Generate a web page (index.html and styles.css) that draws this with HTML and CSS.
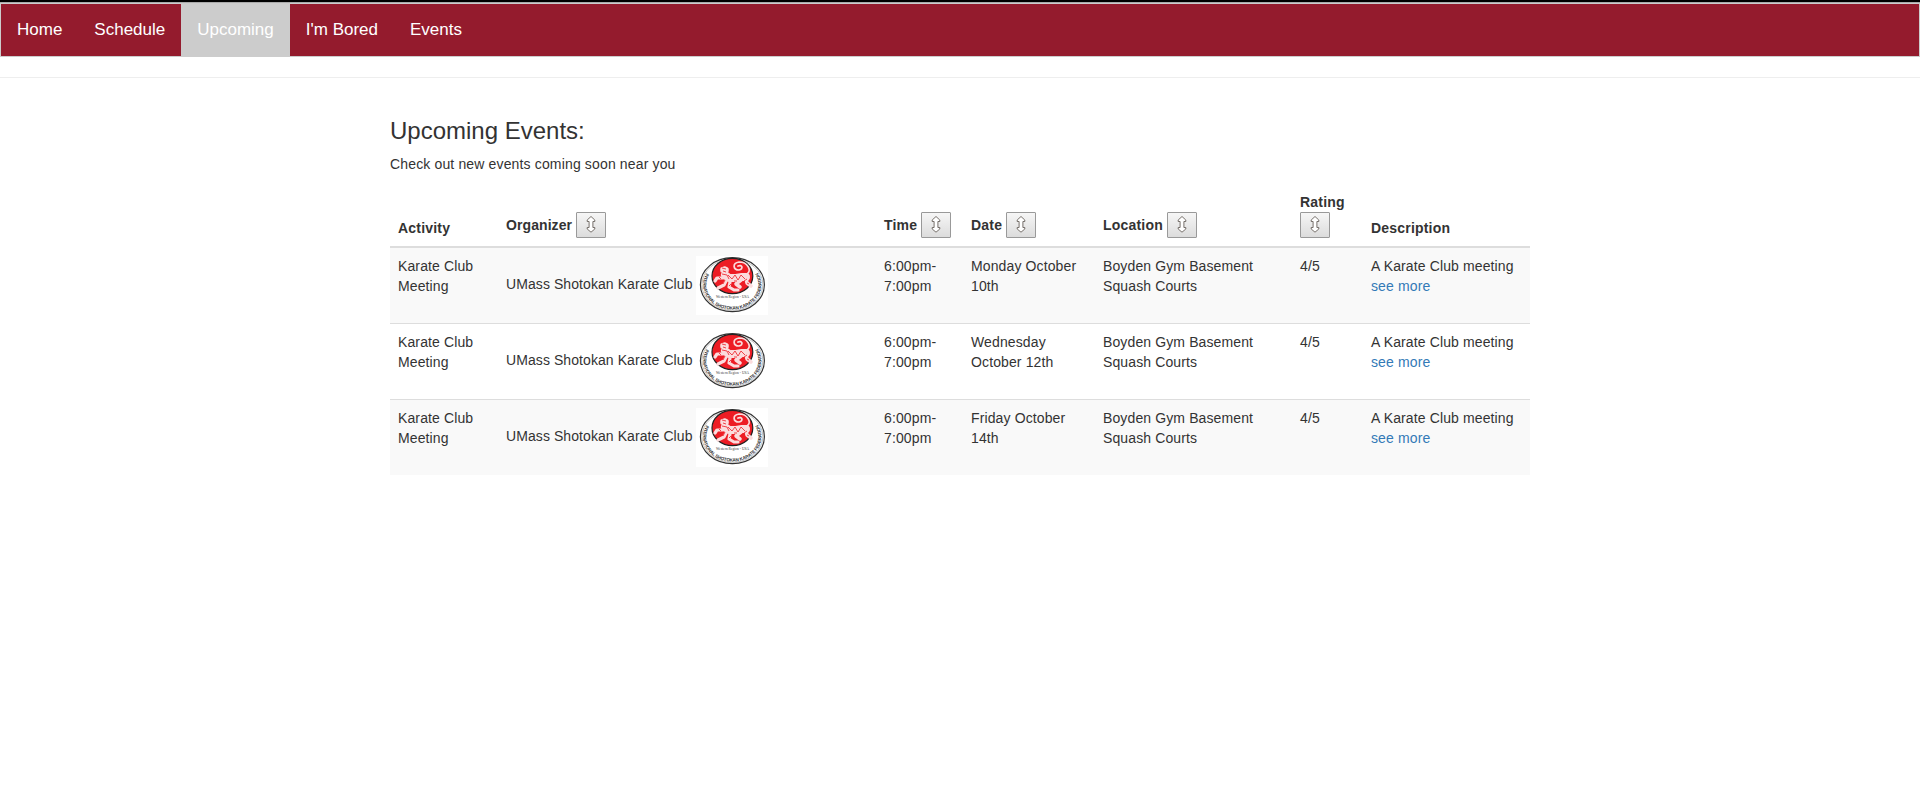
FILE: index.html
```html
<!DOCTYPE html>
<html lang="en">
<head>
<meta charset="utf-8">
<title>Upcoming Events</title>
<link rel="stylesheet" href="styles.css">
</head>
<body>
<svg class="defs" aria-hidden="true">
  <symbol id="sort" viewBox="0 0 10 18">
    <path d="M5 1.5 8.800 5V6.5H6.9V12.5H8.800V14L5 17.200 1.200 14V12.5H3.1V6.5H1.200V5Z" fill="#fff" stroke="#69625c" stroke-width=".9"/>
  </symbol>
  <symbol id="emblem" viewBox="0 0 72 59">
    <rect width="72" height="59" fill="#fff"/>
    <ellipse cx="36.4" cy="28.7" rx="32" ry="27" fill="#fff" stroke="#333" stroke-width="1.2"/>
    <ellipse cx="36.4" cy="28.7" rx="30.5" ry="25.6" fill="none" stroke="#888" stroke-width=".5"/>
    <path id="ring" d="M10.600 17A29.200 24.800 0 1 0 62 17" fill="none"/>
    <text class="ring-text"><textPath href="#ring" textLength="110">INTERNATIONAL SHOTOKAN KARATE FEDERATION</textPath></text>
    <ellipse cx="36.4" cy="20" rx="20.400" ry="17.600" fill="#ed1c24" stroke="#222" stroke-width="1.200"/>
    <g fill="none" stroke="#fbdcdd" stroke-linecap="round" stroke-linejoin="round">
      <path d="M26 15 26 13 29 12 31 13 31 15 28 16" stroke-width="3.500"/>
      <path d="M29 19 33 22 40 22 46 21 50 21" stroke-width="8"/>
      <path d="M27 22 21 22 19 25M30 25 28 29 22 32M34 26 33 31 38 34 42 34" stroke-width="3.200"/>
      <path d="M50 22 51 27 55 30M45 24 40 28 44 31" stroke-width="3.600"/>
      <path d="M51 18C56 15 52 6 43 6 36 7 37 14 43 14 48 13 46 8 42 10" stroke-width="1.700"/>
    </g>
    <path d="M26 12l4 1M26 18l5 1 2 4M32 19l4 4 3-4 3 5 3-5 4 4M29 24l-2 4M23 21l2 2M51 23l-3 2M35 28l-2 2M38 25h3M27 15l3 1M51 27l2 1" fill="none" stroke="#ed1c24" stroke-width=".8"/>
    <text class="region-text" x="36.500" y="42" textLength="33">Western Region - USA</text>
  </symbol>
</svg>
<div class="topline"></div>
<ul class="nav">
  <li><a>Home</a></li>
  <li><a>Schedule</a></li>
  <li class="active"><a>Upcoming</a></li>
  <li><a>I'm Bored</a></li>
  <li><a>Events</a></li>
</ul>
<hr class="rule">
<main class="container">
  <h3 class="title">Upcoming Events:</h3>
  <p class="lead">Check out new events coming soon near you</p>
  <table class="events">
    <colgroup><col class="c-activity"><col class="c-organizer"><col class="c-time"><col class="c-date"><col class="c-location"><col class="c-rating"><col class="c-description"></colgroup>
    <thead>
      <tr>
        <th>Activity</th>
        <th class="organizer">Organizer <button class="sort"><svg><use href="#sort"/></svg></button></th>
        <th>Time <button class="sort"><svg><use href="#sort"/></svg></button></th>
        <th>Date <button class="sort"><svg><use href="#sort"/></svg></button></th>
        <th>Location <button class="sort"><svg><use href="#sort"/></svg></button></th>
        <th>Rating <button class="sort"><svg><use href="#sort"/></svg></button></th>
        <th>Description</th>
      </tr>
    </thead>
    <tbody>
      <tr>
        <td>Karate Club Meeting</td>
        <td class="organizer">UMass Shotokan Karate Club <svg class="emblem"><use href="#emblem"/></svg></td>
        <td>6:00pm-7:00pm</td>
        <td>Monday October 10th</td>
        <td>Boyden Gym Basement Squash Courts</td>
        <td>4/5</td>
        <td>A Karate Club meeting <a class="more">see more</a></td>
      </tr>
      <tr>
        <td>Karate Club Meeting</td>
        <td class="organizer">UMass Shotokan Karate Club <svg class="emblem"><use href="#emblem"/></svg></td>
        <td>6:00pm-7:00pm</td>
        <td>Wednesday October 12th</td>
        <td>Boyden Gym Basement Squash Courts</td>
        <td>4/5</td>
        <td>A Karate Club meeting <a class="more">see more</a></td>
      </tr>
      <tr>
        <td>Karate Club Meeting</td>
        <td class="organizer">UMass Shotokan Karate Club <svg class="emblem"><use href="#emblem"/></svg></td>
        <td>6:00pm-7:00pm</td>
        <td>Friday October 14th</td>
        <td>Boyden Gym Basement Squash Courts</td>
        <td>4/5</td>
        <td>A Karate Club meeting <a class="more">see more</a></td>
      </tr>
    </tbody>
  </table>
</main>
</body>
</html>
```
FILE: styles.css
```css
* { box-sizing: border-box; }
body { margin: 0; background: #fff; color: #333; font: 14px/20px "Liberation Sans", Arial, sans-serif; }
.defs { display: none; }
.topline { height: 3px; background: #aaa; border-top: 2px solid #000; }
.nav { display: flex; height: 54px; margin: 0; padding: 0; list-style: none; background: #941b2d; border: 1px solid #ccc; }
.nav li { display: flex; }
.nav a { padding: 14px 16px; color: #fff; font-size: 17px; line-height: 24px; }
.nav .active { background: #ccc; }
.rule { height: 1px; margin: 20px 0; border: 0; background: #eee; }
.container { display: flow-root; width: 1140px; margin: 0 auto; }
.title { margin: 20px 0 10px; font-size: 24px; font-weight: 400; line-height: 26.4px; }
.lead { margin: 0 0 10px; letter-spacing: .15px; }
.events { width: 1140px; table-layout: fixed; border-collapse: collapse; letter-spacing: .12px; }
.c-activity { width: 108px; }
.c-organizer { width: 378px; }
.c-time { width: 87px; }
.c-date { width: 132px; }
.c-location { width: 197px; }
.c-rating { width: 71px; }
.c-description { width: 167px; }
th, td { padding: 8px; text-align: left; vertical-align: top; }
th { vertical-align: bottom; border-bottom: 2px solid #ddd; letter-spacing: .2px; }
td { border-top: 1px solid #ddd; }
.organizer { letter-spacing: .08px; }
tbody tr:nth-child(odd) { background: #f9f9f9; }
.sort { display: inline-flex; align-items: flex-start; justify-content: center; width: 30px; height: 26px; padding: 2px 0 0; vertical-align: -3px; border: 1px solid #999; border-radius: 1px; background: linear-gradient(#f6f6f6, #dcdcdc); }
.sort svg { width: 10px; height: 18px; }
.emblem { width: 72px; height: 59px; vertical-align: middle; }
.ring-text { font: bold 4.6px "Liberation Sans", sans-serif; letter-spacing: 0; fill: #333; }
.region-text { font: 3.5px "Liberation Serif", serif; letter-spacing: 0; fill: #333; text-anchor: middle; }
.more { color: #337ab7; }
```
